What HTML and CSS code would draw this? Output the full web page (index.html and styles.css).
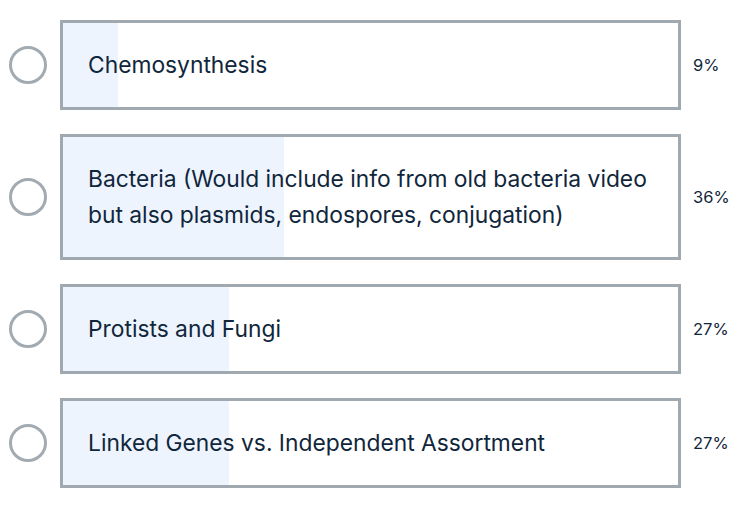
FILE: index.html
```html
<!DOCTYPE html>
<html>
<head>
<meta charset="utf-8">
<link rel="stylesheet" href="styles.css">
</head>
<body>
<div class="poll">
  <div class="row">
    <span class="radio"></span>
    <div class="option" style="--p: 9%">Chemosynthesis</div>
    <span class="pct">9%</span>
  </div>
  <div class="row">
    <span class="radio"></span>
    <div class="option" style="--p: 36%">Bacteria (Would include info from old bacteria video but also plasmids, endospores, conjugation)</div>
    <span class="pct">36%</span>
  </div>
  <div class="row">
    <span class="radio"></span>
    <div class="option" style="--p: 27%">Protists and Fungi</div>
    <span class="pct">27%</span>
  </div>
  <div class="row">
    <span class="radio"></span>
    <div class="option" style="--p: 27%">Linked Genes vs. Independent Assortment</div>
    <span class="pct">27%</span>
  </div>
</div>
</body>
</html>
```

FILE: styles.css
```css
html, body {
  margin: 0;
  padding: 0;
  background: #ffffff;
}

body {
  font-family: Inter, "Open Sans", sans-serif;
  color: #10263b;
}

.poll {
  display: flex;
  flex-direction: column;
  gap: 24px;
  padding: 20px 0 0 9px;
}

.row {
  display: flex;
  align-items: center;
}

.radio {
  flex: none;
  width: 38px;
  height: 38px;
  box-sizing: border-box;
  border: 3px solid #a3abb2;
  border-radius: 50%;
  margin-right: 13px;
}

.option {
  flex: none;
  width: 621px;
  box-sizing: border-box;
  border: 3px solid #a1a9b0;
  padding: 24px 25px;
  font-size: 22.8px;
  line-height: 36px;
  background: linear-gradient(to right, #edf4fe var(--p), #ffffff var(--p));
}

.pct {
  margin-left: 12px;
  font-size: 16.5px;
  color: #10263b;
}
```
